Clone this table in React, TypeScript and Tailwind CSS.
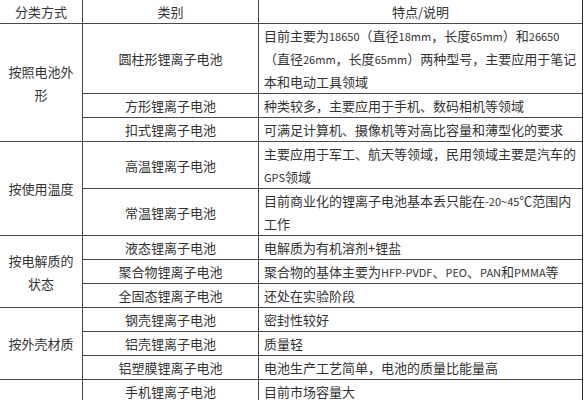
import React from 'react';

type Row = {
  group?: { label: React.ReactNode; span: number };
  kind: string;
  desc: React.ReactNode;
};

// latin runs in the description column are set a little smaller
const L = ({ children }: { children: React.ReactNode }) => (
  <span className="text-[11px] leading-none">{children}</span>
);

const rows: Row[] = [
  {
    group: { label: <>按照电池外<br />形</>, span: 3 },
    kind: '圆柱形锂离子电池',
    desc: (
      <>
        目前主要为<L>18650</L>（直径<L>18mm</L>，长度<L>65mm</L>）和<L>26650</L>
        <br />
        （直径<L>26mm</L>，长度<L>65mm</L>）两种型号，主要应用于笔记
        <br />
        本和电动工具领域
      </>
    ),
  },
  { kind: '方形锂离子电池', desc: '种类较多，主要应用于手机、数码相机等领域' },
  { kind: '扣式锂离子电池', desc: '可满足计算机、摄像机等对高比容量和薄型化的要求' },
  {
    group: { label: '按使用温度', span: 2 },
    kind: '高温锂离子电池',
    desc: (
      <>
        主要应用于军工、航天等领域，民用领域主要是汽车的
        <br />
        <L>GPS</L>领域
      </>
    ),
  },
  {
    kind: '常温锂离子电池',
    desc: (
      <>
        目前商业化的锂离子电池基本丢只能在<L>-20~45</L>℃范围内
        <br />
        工作
      </>
    ),
  },
  {
    group: { label: <>按电解质的<br />状态</>, span: 3 },
    kind: '液态锂离子电池',
    desc: '电解质为有机溶剂+锂盐',
  },
  {
    kind: '聚合物锂离子电池',
    desc: (
      <>
        聚合物的基体主要为<L>HFP-PVDF</L>、<L>PEO</L>、<L>PAN</L>和<L>PMMA</L>等
      </>
    ),
  },
  { kind: '全固态锂离子电池', desc: '还处在实验阶段' },
  {
    group: { label: '按外壳材质', span: 3 },
    kind: '钢壳锂离子电池',
    desc: '密封性较好',
  },
  { kind: '铝壳锂离子电池', desc: '质量轻' },
  { kind: '铝塑膜锂离子电池', desc: '电池生产工艺简单，电池的质量比能量高' },
  {
    group: { label: '', span: 1 },
    kind: '手机锂离子电池',
    desc: '目前市场容量大',
  },
];

const cell = 'border-b border-r border-[#4a4a4a] p-0 leading-[23px] align-middle';

export default function App() {
  return (
    <div
      className="w-[585px] h-[400px] overflow-hidden bg-white text-[13px] text-[#333]"
      style={{ fontFamily: '"Noto Sans CJK SC", "Liberation Sans", sans-serif' }}
    >
      <table className="table-fixed border-separate border-spacing-0 w-[583px]">
        <colgroup>
          <col className="w-[83px]" />
          <col className="w-[176px]" />
          <col className="w-[324px]" />
        </colgroup>
        <thead>
          <tr>
            <th className={`${cell} font-normal text-center`}>分类方式</th>
            <th className={`${cell} font-normal text-center`}>类别</th>
            <th className={`${cell} font-normal text-center border-r-[#2a2a2a]`}>特点/说明</th>
          </tr>
        </thead>
        <tbody>
          {rows.map((r, i) => (
            <tr key={i}>
              {r.group && (
                <td rowSpan={r.group.span} className={`${cell} text-center`}>
                  {r.group.label}
                </td>
              )}
              <td className={`${cell} text-center whitespace-nowrap`}>{r.kind}</td>
              <td className={`${cell} pl-[5px] whitespace-nowrap overflow-hidden border-r-[#2a2a2a]`}>
                {r.desc}
              </td>
            </tr>
          ))}
        </tbody>
      </table>
    </div>
  );
}
